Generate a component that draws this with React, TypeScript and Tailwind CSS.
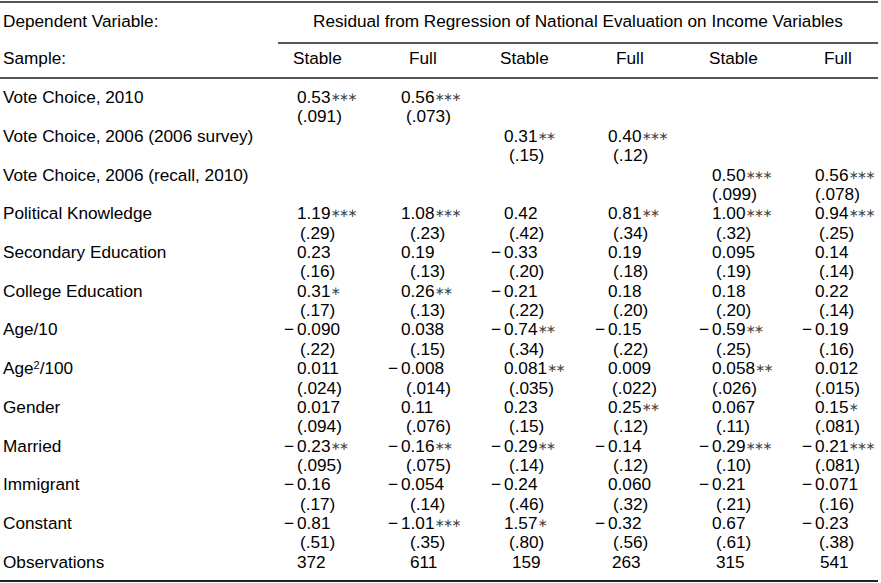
import React from "react";

type Cell = { c: string; s?: string; se: string } | null;
type Row = { label: React.ReactNode; cells: Cell[] };

const colW = ["w-[104px]", "w-[103px]", "w-[104px]", "w-[104px]", "w-[103px]", "w-[80px]"];
const coefPl = ["pl-[14px]", "pl-[14px]", "pl-[14px]", "pl-[14px]", "pl-[14px]", "pl-[14px]"];
const se2Pl = ["pl-[17px]", "pl-[23px]", "pl-[19px]", "pl-[19px]", "pl-[18px]", "pl-[18px]"];
const se3Pl = ["pl-[14px]", "pl-[19px]", "pl-[19px]", "pl-[18px]", "pl-[14px]", "pl-[14px]"];
const obsPl = ["pl-[14px]", "pl-[23px]", "pl-[22px]", "pl-[18px]", "pl-[18px]", "pl-[19px]"];
const hdrPl = ["pl-[10px]", "pl-[22px]", "pl-[10px]", "pl-[22px]", "pl-[11px]", "pl-[23px]"];
const hdr = ["Stable", "Full", "Stable", "Full", "Stable", "Full"];

const C = (c: string, s: string, se: string): Cell => ({ c, s, se });

const rows: Row[] = [
  { label: "Vote Choice, 2010", cells: [C("0.53", "∗∗∗", "(.091)"), C("0.56", "∗∗∗", "(.073)"), null, null, null, null] },
  { label: "Vote Choice, 2006 (2006 survey)", cells: [null, null, C("0.31", "∗∗", "(.15)"), C("0.40", "∗∗∗", "(.12)"), null, null] },
  { label: "Vote Choice, 2006 (recall, 2010)", cells: [null, null, null, null, C("0.50", "∗∗∗", "(.099)"), C("0.56", "∗∗∗", "(.078)")] },
  { label: "Political Knowledge", cells: [C("1.19", "∗∗∗", "(.29)"), C("1.08", "∗∗∗", "(.23)"), C("0.42", "", "(.42)"), C("0.81", "∗∗", "(.34)"), C("1.00", "∗∗∗", "(.32)"), C("0.94", "∗∗∗", "(.25)")] },
  { label: "Secondary Education", cells: [C("0.23", "", "(.16)"), C("0.19", "", "(.13)"), C("-0.33", "", "(.20)"), C("0.19", "", "(.18)"), C("0.095", "", "(.19)"), C("0.14", "", "(.14)")] },
  { label: "College Education", cells: [C("0.31", "∗", "(.17)"), C("0.26", "∗∗", "(.13)"), C("-0.21", "", "(.22)"), C("0.18", "", "(.20)"), C("0.18", "", "(.20)"), C("0.22", "", "(.14)")] },
  { label: "Age/10", cells: [C("-0.090", "", "(.22)"), C("0.038", "", "(.15)"), C("-0.74", "∗∗", "(.34)"), C("-0.15", "", "(.22)"), C("-0.59", "∗∗", "(.25)"), C("-0.19", "", "(.16)")] },
  {
    label: (
      <>
        Age<sup className="text-[11px]">2</sup>/100
      </>
    ),
    cells: [C("0.011", "", "(.024)"), C("-0.008", "", "(.014)"), C("0.081", "∗∗", "(.035)"), C("0.009", "", "(.022)"), C("0.058", "∗∗", "(.026)"), C("0.012", "", "(.015)")],
  },
  { label: "Gender", cells: [C("0.017", "", "(.094)"), C("0.11", "", "(.076)"), C("0.23", "", "(.15)"), C("0.25", "∗∗", "(.12)"), C("0.067", "", "(.11)"), C("0.15", "∗", "(.081)")] },
  { label: "Married", cells: [C("-0.23", "∗∗", "(.095)"), C("-0.16", "∗∗", "(.075)"), C("-0.29", "∗∗", "(.14)"), C("-0.14", "", "(.12)"), C("-0.29", "∗∗∗", "(.10)"), C("-0.21", "∗∗∗", "(.081)")] },
  { label: "Immigrant", cells: [C("-0.16", "", "(.17)"), C("-0.054", "", "(.14)"), C("-0.24", "", "(.46)"), C("0.060", "", "(.32)"), C("-0.21", "", "(.21)"), C("-0.071", "", "(.16)")] },
  { label: "Constant", cells: [C("-0.81", "", "(.51)"), C("-1.01", "∗∗∗", "(.35)"), C("1.57", "∗", "(.80)"), C("-0.32", "", "(.56)"), C("0.67", "", "(.61)"), C("-0.23", "", "(.38)")] },
];

const obs = ["372", "611", "159", "263", "315", "541"];

function Coef({ v, s }: { v: string; s?: string }) {
  const neg = v.startsWith("-");
  const num = neg ? v.slice(1) : v;
  return (
    <span className="whitespace-nowrap">
      {neg && <span className="inline-block w-[13px] -ml-[13px]">−</span>}
      {num}
      {s ? (
        <span className="font-['DejaVu_Sans'] text-[12px] leading-none tracking-[-1.7px] text-[#444] align-[2px]">{s}</span>
      ) : null}
    </span>
  );
}

export default function App() {
  return (
    <div className="w-[881px] h-[583px] overflow-hidden bg-white font-['Liberation_Sans',Arial,sans-serif] text-[17.2px] leading-[19.36px] text-black">
      <div className="pt-[1px]">
        <div className="h-[2px] w-[878px] bg-[#555]" />
      </div>
      <div className="mt-[8.5px] flex">
        <div className="w-[278px] pl-[3px]">Dependent Variable:</div>
        <div className="w-[600px] text-center whitespace-nowrap">
          Residual from Regression of National Evaluation on Income Variables
        </div>
      </div>
      <div className="mt-[11px] ml-[278px] w-[600px] h-[2px] bg-[#555]" />
      <div className="mt-[5.5px] flex">
        <div className="w-[283px] pl-[3px]">Sample:</div>
        {hdr.map((h, i) => (
          <div key={i} className={`${colW[i]} ${hdrPl[i]}`}>
            {h}
          </div>
        ))}
      </div>
      <div className="mt-[8px] h-[2px] w-[878px] bg-[#555]" />
      <div className="mt-[9.4px]">
        {rows.map((r, ri) => (
          <div key={ri}>
            <div className="flex">
              <div className="w-[283px] pl-[3px] whitespace-nowrap">{r.label}</div>
              {r.cells.map((c, i) => (
                <div key={i} className={`${colW[i]} ${coefPl[i]}`}>
                  {c ? <Coef v={c.c} s={c.s} /> : "\u00a0"}
                </div>
              ))}
            </div>
            <div className="flex">
              <div className="w-[283px]">{"\u00a0"}</div>
              {r.cells.map((c, i) => (
                <div key={i} className={`${colW[i]} ${c && c.se.length >= 6 ? se3Pl[i] : se2Pl[i]}`}>
                  {c ? c.se : "\u00a0"}
                </div>
              ))}
            </div>
          </div>
        ))}
        <div className="flex">
          <div className="w-[283px] pl-[3px]">Observations</div>
          {obs.map((o, i) => (
            <div key={i} className={`${colW[i]} ${obsPl[i]}`}>
              {o}
            </div>
          ))}
        </div>
      </div>
      <div className="mt-[8px] h-[2px] w-[878px] bg-[#222]" />
    </div>
  );
}
